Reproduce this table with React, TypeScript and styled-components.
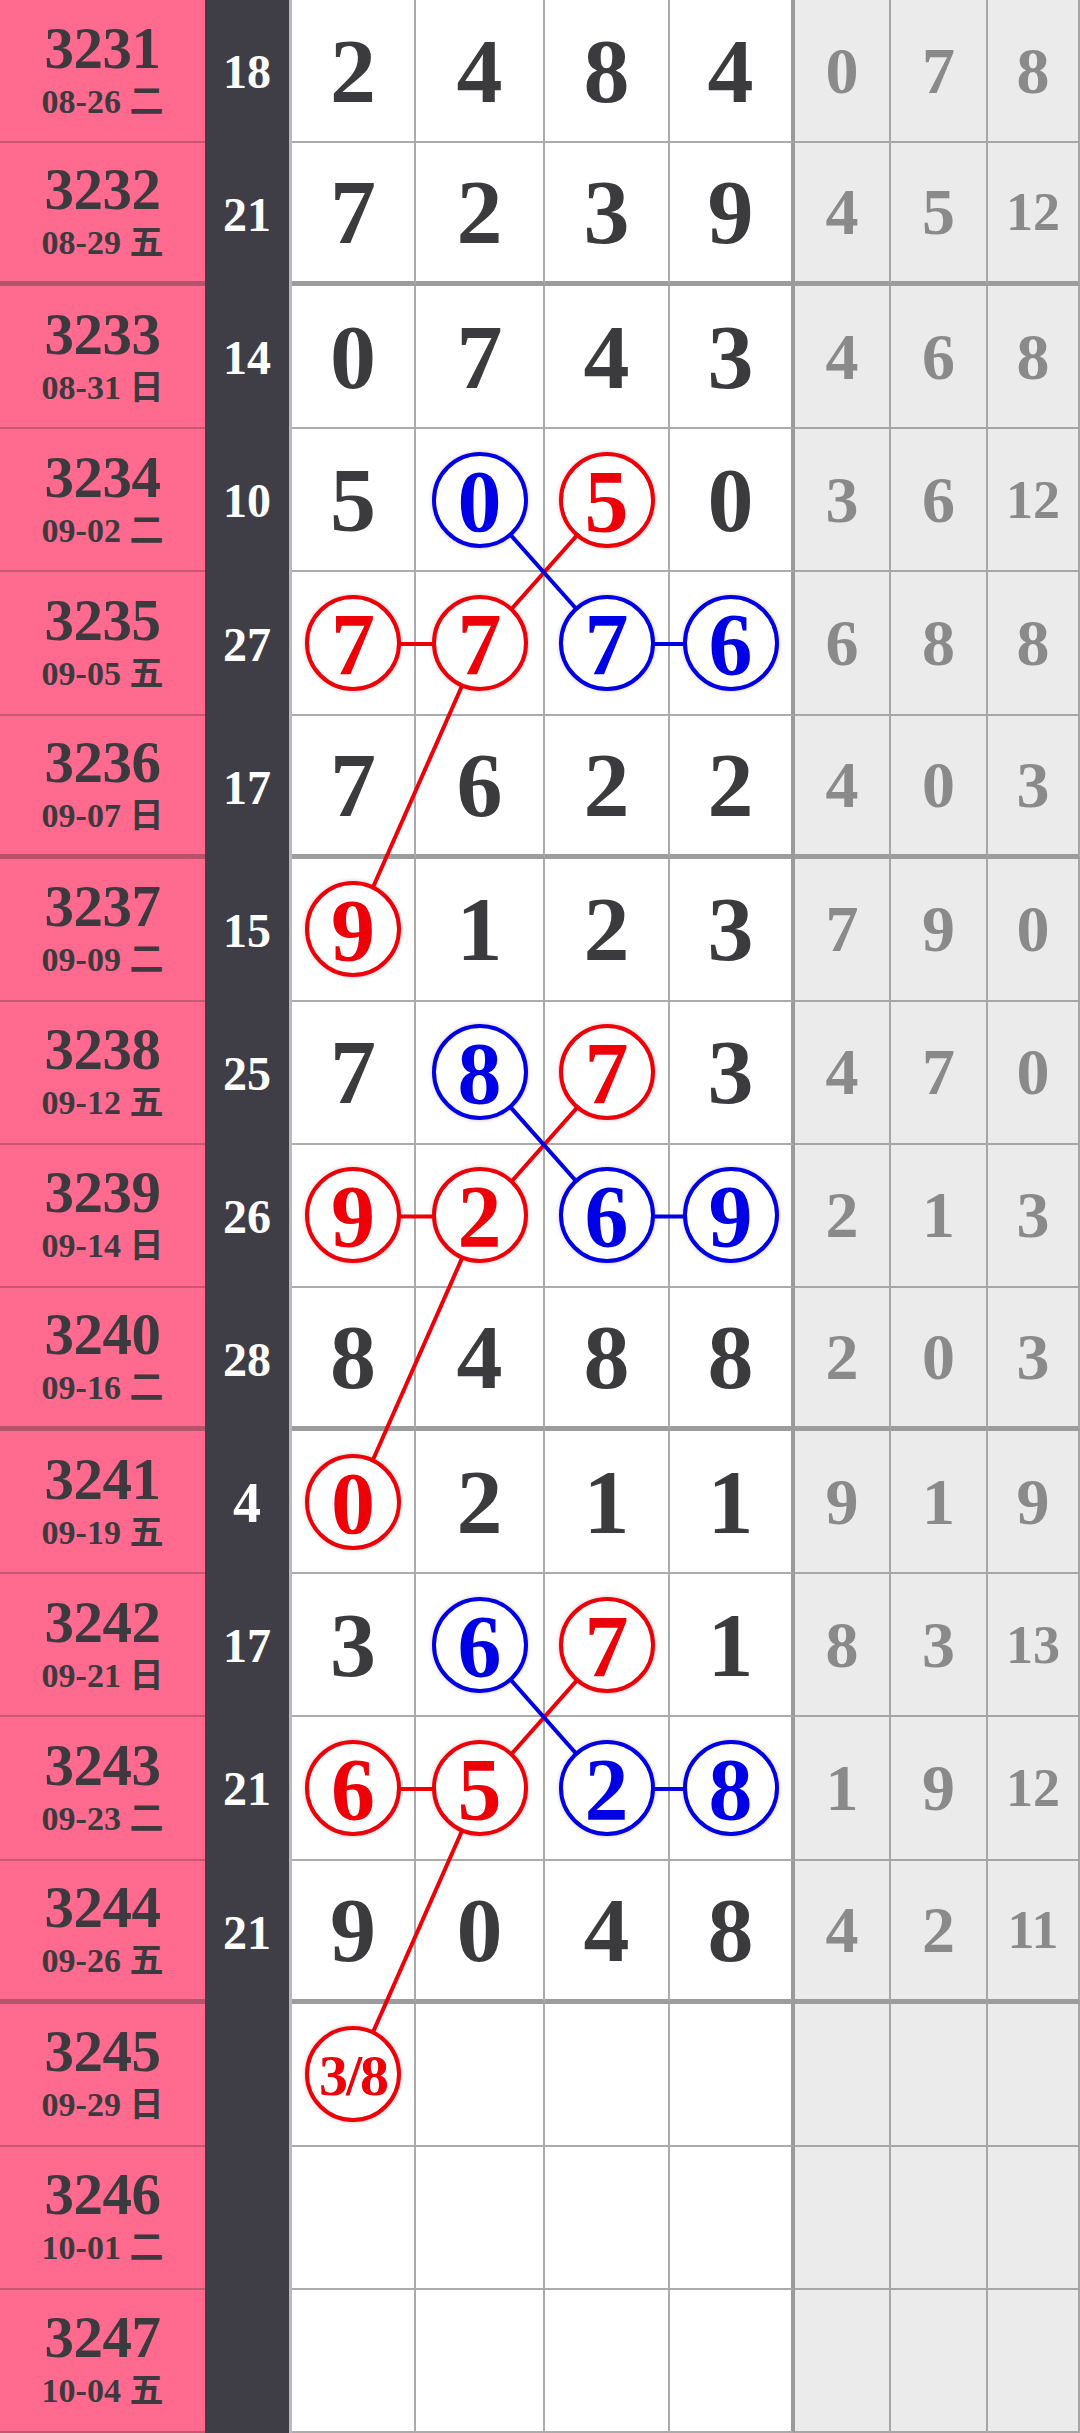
import * as React from 'react';
import styled, { createGlobalStyle } from 'styled-components';

const GlobalStyle = createGlobalStyle`
  html, body {
    margin: 0;
    padding: 0;
    background: #ffffff;
  }
  body {
    font-family: 'Liberation Serif', 'Noto Sans CJK SC', serif;
  }
`;

const PAGE_H = 2433;
const ROW_COUNT = 17;
const ROW_H = PAGE_H / ROW_COUNT;
// centers of the four number columns
const NUM_X = [354, 480.5, 607.5, 732.5];
const RED = '#ee0008';
const BLUE = '#0000e6';

type Row = {
  issue: string;
  date: string;
  sum?: string;
  nums: string[];
  marks: string; // '.', 'r', 'b' per number column
  miss: string[];
};

const rows: Row[] = [
  { issue: '3231', date: '08-26 二', sum: '18', nums: ['2', '4', '8', '4'], marks: '....', miss: ['0', '7', '8'] },
  { issue: '3232', date: '08-29 五', sum: '21', nums: ['7', '2', '3', '9'], marks: '....', miss: ['4', '5', '12'] },
  { issue: '3233', date: '08-31 日', sum: '14', nums: ['0', '7', '4', '3'], marks: '....', miss: ['4', '6', '8'] },
  { issue: '3234', date: '09-02 二', sum: '10', nums: ['5', '0', '5', '0'], marks: '.br.', miss: ['3', '6', '12'] },
  { issue: '3235', date: '09-05 五', sum: '27', nums: ['7', '7', '7', '6'], marks: 'rrbb', miss: ['6', '8', '8'] },
  { issue: '3236', date: '09-07 日', sum: '17', nums: ['7', '6', '2', '2'], marks: '....', miss: ['4', '0', '3'] },
  { issue: '3237', date: '09-09 二', sum: '15', nums: ['9', '1', '2', '3'], marks: 'r...', miss: ['7', '9', '0'] },
  { issue: '3238', date: '09-12 五', sum: '25', nums: ['7', '8', '7', '3'], marks: '.br.', miss: ['4', '7', '0'] },
  { issue: '3239', date: '09-14 日', sum: '26', nums: ['9', '2', '6', '9'], marks: 'rrbb', miss: ['2', '1', '3'] },
  { issue: '3240', date: '09-16 二', sum: '28', nums: ['8', '4', '8', '8'], marks: '....', miss: ['2', '0', '3'] },
  { issue: '3241', date: '09-19 五', sum: '4', nums: ['0', '2', '1', '1'], marks: 'r...', miss: ['9', '1', '9'] },
  { issue: '3242', date: '09-21 日', sum: '17', nums: ['3', '6', '7', '1'], marks: '.br.', miss: ['8', '3', '13'] },
  { issue: '3243', date: '09-23 二', sum: '21', nums: ['6', '5', '2', '8'], marks: 'rrbb', miss: ['1', '9', '12'] },
  { issue: '3244', date: '09-26 五', sum: '21', nums: ['9', '0', '4', '8'], marks: '....', miss: ['4', '2', '11'] },
  { issue: '3245', date: '09-29 日', nums: ['3/8', '', '', ''], marks: 'r...', miss: ['', '', ''] },
  { issue: '3246', date: '10-01 二', nums: ['', '', '', ''], marks: '....', miss: ['', '', ''] },
  { issue: '3247', date: '10-04 五', nums: ['', '', '', ''], marks: '....', miss: ['', '', ''] },
];

// each pattern starts on the row with the blue/red pair
const patternStarts = [3, 7, 11];

type Seg = { color: string; r1: number; c1: number; r2: number; c2: number };
const segments: Seg[] = patternStarts.flatMap((r) => [
  { color: RED, r1: r, c1: 2, r2: r + 1, c2: 1 },
  { color: RED, r1: r + 1, c1: 0, r2: r + 1, c2: 1 },
  { color: RED, r1: r + 1, c1: 1, r2: r + 3, c2: 0 },
  { color: BLUE, r1: r, c1: 1, r2: r + 1, c2: 2 },
  { color: BLUE, r1: r + 1, c1: 2, r2: r + 1, c2: 3 },
]);

const isGroupEnd = (i: number) => i % 4 === 1;

const Table = styled.div`
  position: relative;
  display: grid;
  grid-template-columns: 205px 87px 124px 129px 125px 125px 96px 97px 92px;
  grid-template-rows: repeat(17, 1fr);
  width: 1080px;
  height: ${PAGE_H}px;
  overflow: hidden;
`;

const IssueCell = styled.div<{ $thick: boolean }>`
  box-sizing: border-box;
  background: #ff6a8e;
  display: flex;
  flex-direction: column;
  align-items: center;
  justify-content: center;
  color: #3c3a3e;
  font-weight: 700;
  border-bottom: ${(p) => (p.$thick ? '5px solid #b4536a' : '2px solid #c9566f')};
`;

const IssueNo = styled.div`
  font-size: 59px;
  line-height: 54px;
  letter-spacing: -0.5px;
`;

const IssueDate = styled.div`
  font-size: 34px;
  line-height: 38px;
  margin-top: 8px;
`;

const SumCell = styled.div<{ $single: boolean }>`
  background: #3f3e47;
  color: #ffffff;
  display: flex;
  align-items: center;
  justify-content: center;
  font-weight: 700;
  font-size: ${(p) => (p.$single ? '56px' : '48px')};
  border-right: 3px solid #b9b9b9;
`;

const NumCell = styled.div<{ $thick: boolean; $last: boolean }>`
  box-sizing: border-box;
  background: #ffffff;
  display: flex;
  align-items: center;
  justify-content: center;
  color: #3b3b3d;
  font-weight: 700;
  font-size: 92px;
  line-height: 1;
  border-right: ${(p) => (p.$last ? '4px solid #9a9a9a' : '2px solid #ababab')};
  border-bottom: ${(p) => (p.$thick ? '5px solid #9c9c9c' : '2px solid #ababab')};
`;

const MissCell = styled.div<{ $thick: boolean; $double: boolean }>`
  box-sizing: border-box;
  background: #ebebeb;
  display: flex;
  align-items: center;
  justify-content: center;
  color: #8a8a8a;
  font-weight: 700;
  font-size: ${(p) => (p.$double ? '54px' : '66px')};
  line-height: 1;
  border-right: 2px solid #a6a6a6;
  border-bottom: ${(p) => (p.$thick ? '5px solid #9c9c9c' : '2px solid #a6a6a6')};
  &:last-child {
    border-right: none;
  }
`;

const Ball = styled.div<{ $color: string; $small?: boolean }>`
  position: relative;
  z-index: 2;
  box-sizing: border-box;
  width: 96px;
  height: 96px;
  border-radius: 50%;
  border: 4px solid ${(p) => p.$color};
  background: #ffffff;
  color: ${(p) => p.$color};
  display: flex;
  align-items: center;
  justify-content: center;
  font-size: ${(p) => (p.$small ? '58px' : '88px')};
  letter-spacing: ${(p) => (p.$small ? '-2px' : '0')};
  line-height: 1;
  padding-top: 4px;
  box-shadow: 0 0 4px rgba(120, 0, 0, 0.25);
`;

const Overlay = styled.svg`
  position: absolute;
  left: 0;
  top: 0;
  z-index: 1;
  pointer-events: none;
`;

export default function App() {
  return (
    <>
      <GlobalStyle />
      <Table>
        {rows.map((row, i) => {
          const thick = isGroupEnd(i);
          return (
            <React.Fragment key={row.issue}>
              <IssueCell $thick={thick}>
                <IssueNo>{row.issue}</IssueNo>
                <IssueDate>{row.date}</IssueDate>
              </IssueCell>
              <SumCell $single={(row.sum ?? '').length === 1}>{row.sum}</SumCell>
              {row.nums.map((n, c) => {
                const mark = row.marks[c];
                const color = mark === 'r' ? RED : mark === 'b' ? BLUE : '';
                return (
                  <NumCell key={c} $thick={thick} $last={c === 3}>
                    {color ? (
                      <Ball $color={color} $small={n.length > 1}>
                        {n}
                      </Ball>
                    ) : (
                      n
                    )}
                  </NumCell>
                );
              })}
              {row.miss.map((m, c) => (
                <MissCell key={'m' + c} $thick={thick} $double={m.length > 1}>
                  {m}
                </MissCell>
              ))}
            </React.Fragment>
          );
        })}
        <Overlay width={1080} height={PAGE_H} viewBox={`0 0 1080 ${PAGE_H}`}>
          {segments.map((s, k) => (
            <line
              key={k}
              x1={NUM_X[s.c1]}
              y1={(s.r1 + 0.5) * ROW_H}
              x2={NUM_X[s.c2]}
              y2={(s.r2 + 0.5) * ROW_H}
              stroke={s.color}
              strokeWidth={4}
            />
          ))}
        </Overlay>
      </Table>
    </>
  );
}
